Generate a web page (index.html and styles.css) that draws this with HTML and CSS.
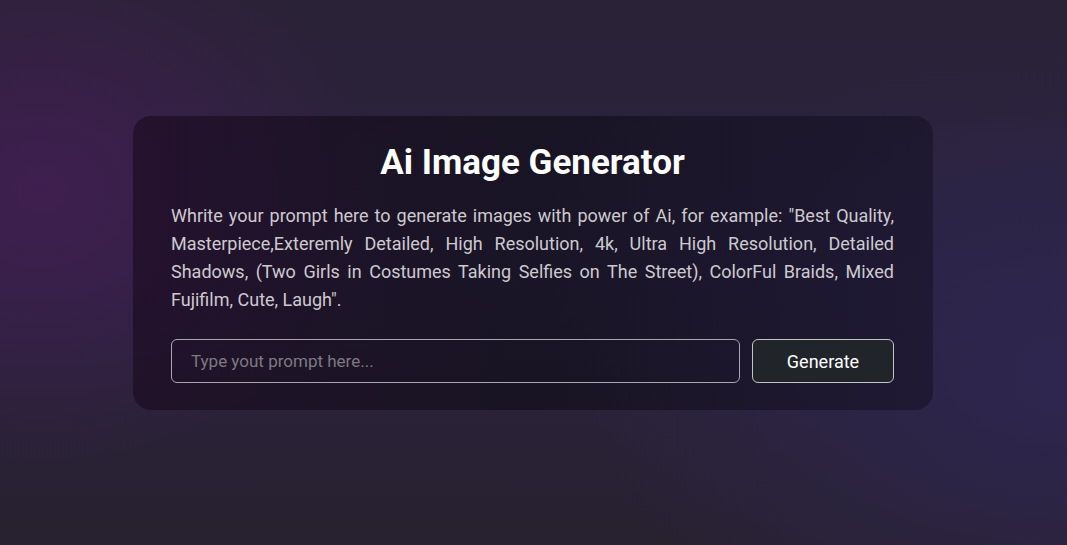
FILE: index.html
```html
<!DOCTYPE html>
<html lang="en">
<head>
<meta charset="utf-8">
<title>Ai Image Generator</title>
<link rel="stylesheet" href="styles.css">
</head>
<body>
<main class="page">
  <section class="card">
    <h1 class="title">Ai Image Generator</h1>
    <p class="desc">Whrite your prompt here to generate images with power of Ai, for example: "Best Quality, Masterpiece,Exteremly Detailed, High Resolution, 4k, Ultra High Resolution, Detailed Shadows, (Two Girls in Costumes Taking Selfies on The Street), ColorFul Braids, Mixed Fujifilm, Cute, Laugh".</p>
    <form class="row">
      <input class="prompt" type="text" placeholder="Type yout prompt here...">
      <button class="btn" type="button">Generate</button>
    </form>
  </section>
</main>
</body>
</html>
```
FILE: styles.css
```css
* { box-sizing: border-box; }
html, body { margin: 0; height: 100%; }
body {
  font-family: Roboto, "Noto Sans", sans-serif;
  background:
    radial-gradient(ellipse 460px 380px at 40px 190px, rgba(64,30,80,0.95), rgba(64,30,80,0) 72%),
    radial-gradient(ellipse 620px 420px at 1067px 380px, rgba(46,38,80,0.95), rgba(46,38,80,0) 78%),
    linear-gradient(180deg, #2a2236 0%, #2b2340 50%, #28212f 100%);
  background-color: #2a2338;
  overflow: hidden;
}
.page {
  height: 545px;
  display: flex;
  justify-content: center;
  padding: 116px 1px 0 0;
}
.card {
  width: 800px;
  height: 294px;
  border-radius: 18px;
  background: linear-gradient(90deg, rgba(24,8,28,0.6), rgba(12,10,20,0.58) 50%, rgba(18,14,34,0.52));
  padding: 26px 39px 26px 38px;
}
.title {
  margin: 0;
  text-align: center;
  color: #fff;
  font-size: 35px;
  font-weight: 700;
  line-height: 42px;
}
.desc {
  margin: 18px 0 25px;
  color: #cdcacf;
  font-size: 18px;
  line-height: 28px;
  text-align: justify;
}
.row {
  display: flex;
  gap: 12px;
}
.prompt {
  flex: 1;
  height: 44px;
  border: 1px solid #a9a6ad;
  border-radius: 6px;
  background: transparent;
  color: #fff;
  font-family: inherit;
  font-size: 17px;
  padding: 0 19px;
  outline: none;
}
.prompt::placeholder { color: #7d7a82; }
.btn {
  width: 142px;
  height: 44px;
  border: 1px solid #c4c4c8;
  border-radius: 6px;
  background: #212529;
  color: #fff;
  font-family: inherit;
  font-size: 18px;
}
```
